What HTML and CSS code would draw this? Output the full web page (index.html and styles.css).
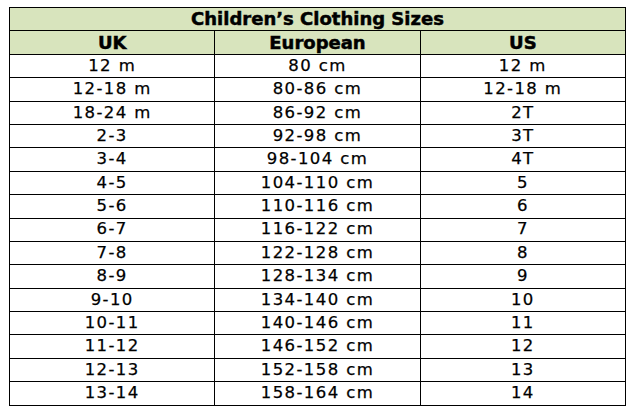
FILE: index.html
```html
<!DOCTYPE html>
<html lang="en">
<head>
<meta charset="utf-8">
<title>Children’s Clothing Sizes</title>
<link rel="stylesheet" href="styles.css">
</head>
<body>
<table class="sizes">
  <thead>
    <tr class="title-row"><th colspan="3">Children’s Clothing Sizes</th></tr>
    <tr class="head-row"><th>UK</th><th>European</th><th>US</th></tr>
  </thead>
  <tbody>
    <tr><td>12 m</td><td>80 cm</td><td>12 m</td></tr>
    <tr><td>12-18 m</td><td>80-86 cm</td><td>12-18 m</td></tr>
    <tr><td>18-24 m</td><td>86-92 cm</td><td>2T</td></tr>
    <tr><td>2-3</td><td>92-98 cm</td><td>3T</td></tr>
    <tr><td>3-4</td><td>98-104 cm</td><td>4T</td></tr>
    <tr><td>4-5</td><td>104-110 cm</td><td>5</td></tr>
    <tr><td>5-6</td><td>110-116 cm</td><td>6</td></tr>
    <tr><td>6-7</td><td>116-122 cm</td><td>7</td></tr>
    <tr><td>7-8</td><td>122-128 cm</td><td>8</td></tr>
    <tr><td>8-9</td><td>128-134 cm</td><td>9</td></tr>
    <tr><td>9-10</td><td>134-140 cm</td><td>10</td></tr>
    <tr><td>10-11</td><td>140-146 cm</td><td>11</td></tr>
    <tr><td>11-12</td><td>146-152 cm</td><td>12</td></tr>
    <tr><td>12-13</td><td>152-158 cm</td><td>13</td></tr>
    <tr><td>13-14</td><td>158-164 cm</td><td>14</td></tr>
  </tbody>
</table>
</body>
</html>
```
FILE: styles.css
```css
html, body {
  margin: 0;
  padding: 0;
  background: #ffffff;
}

body {
  padding: 7px 0 0 9px;
}

.sizes {
  border-collapse: collapse;
  width: 617px;
  table-layout: fixed;
  font-family: "DejaVu Sans", Verdana, sans-serif;
  color: #000;
}

.sizes th,
.sizes td {
  border: 1px solid #000;
  height: 22.4px;
  padding: 0;
  text-align: center;
  vertical-align: middle;
  line-height: 1;
}

.sizes th {
  background: #d8e4bd;
  font-weight: bold;
  font-size: 18px;
  letter-spacing: 0;
  -webkit-text-stroke: 0.5px #000;
}

.sizes td {
  font-size: 16.5px;
  letter-spacing: 1.4px;
  -webkit-text-stroke: 0.25px #000;
}
```
